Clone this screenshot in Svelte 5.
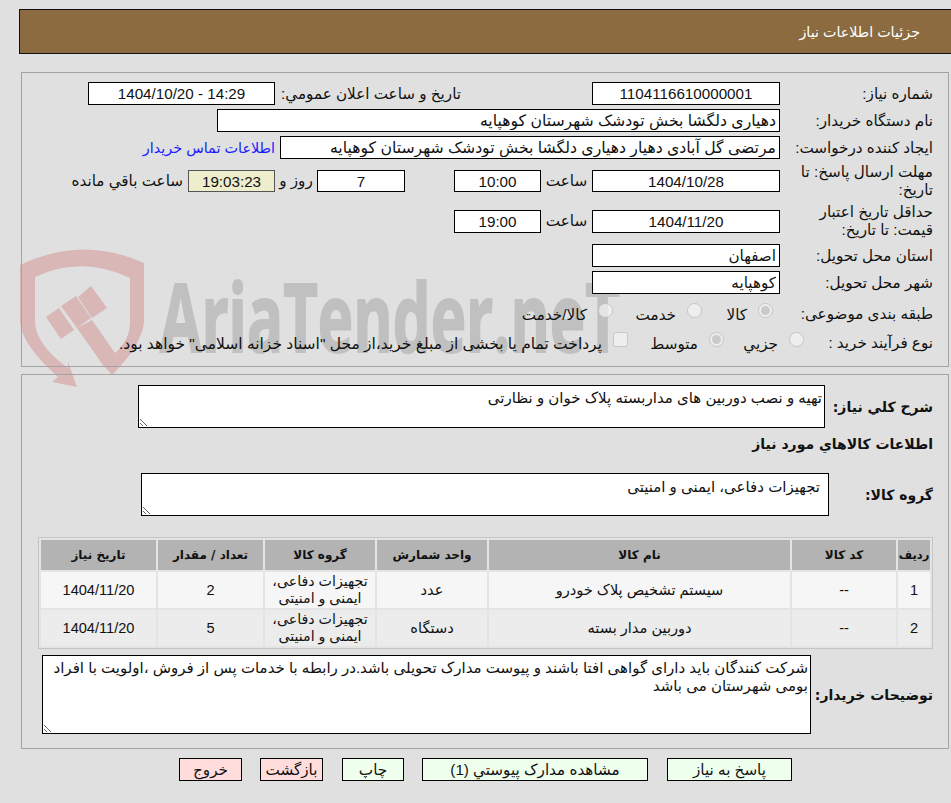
<script>
  const goods = [
    { row: 1, code: '--', name: 'سیستم تشخیص پلاک خودرو', unit: 'عدد', group: 'تجهیزات دفاعی، ایمنی و امنیتی', qty: 2, date: '1404/11/20' },
    { row: 2, code: '--', name: 'دوربین مدار بسته', unit: 'دستگاه', group: 'تجهیزات دفاعی، ایمنی و امنیتی', qty: 5, date: '1404/11/20' }
  ];
</script>

<div class="page" dir="rtl">
  <svg class="watermark" width="640" height="160" viewBox="0 240 640 160" aria-hidden="true">
    <path class="shield" d="M20 265 Q82 235 144 263 L144 322 Q142 345 112 375 L103 365 L77 328 L92 320 L115 353 Q130 340 130 322 L130 278 Q82 255 35 277 L35 322 Q36 345 68 368 L68 362 L77 387 L52 382 L58 377 Q22 345 20 322Z" />
    <path class="shield" d="M46 317 L59 308 L74 330 L61 339Z M61 306 L76 296 L91 318 L77 328Z M78 297 L91 286 L107 308 L92 318Z" />
    <text class="wm-text" x="160" y="352" textLength="460" lengthAdjust="spacingAndGlyphs">AriaTender.neT</text>
  </svg>

  <header class="title-bar">جزئیات اطلاعات نیاز</header>

  <section class="panel first">
    <div class="row">
      <span class="label">شماره نیاز:</span>
      <input class="field mid" readonly value="1104116610000001" />
      <span class="label public">تاریخ و ساعت اعلان عمومي:</span>
      <input class="field mid stamp" readonly value="1404/10/20 - 14:29" dir="ltr" />
    </div>
    <div class="row">
      <span class="label">نام دستگاه خریدار:</span>
      <input class="field buyer" readonly value="دهیاری دلگشا بخش تودشک شهرستان کوهپایه" />
    </div>
    <div class="row">
      <span class="label">ایجاد کننده درخواست:</span>
      <input class="field creator" readonly value="مرتضی گل آبادی دهیار دهیاری دلگشا بخش تودشک شهرستان کوهپایه" />
      <a class="contact" href="#contact">اطلاعات تماس خریدار</a>
    </div>
    <div class="row tall">
      <span class="label">مهلت ارسال پاسخ: تا تاریخ:</span>
      <input class="field mid short" readonly value="1404/10/28" />
      <span class="hour">ساعت</span>
      <input class="field small short" readonly value="10:00" />
      <input class="field days short" readonly value="7" />
      <span class="day-word">روز و</span>
      <input class="field clock short" readonly value="19:03:23" />
      <span class="left-word">ساعت باقي مانده</span>
    </div>
    <div class="row tall place-gap">
      <span class="label">حداقل تاریخ اعتبار قیمت: تا تاریخ:</span>
      <input class="field mid" readonly value="1404/11/20" />
      <span class="hour">ساعت</span>
      <input class="field small" readonly value="19:00" />
    </div>
    <div class="row">
      <span class="label">استان محل تحویل:</span>
      <input class="field mid start" readonly value="اصفهان" />
    </div>
    <div class="row">
      <span class="label">شهر محل تحویل:</span>
      <input class="field mid start" readonly value="کوهپایه" />
    </div>
    <div class="row options topic">
      <span class="label">طبقه بندی موضوعی:</span>
      <label class="opt o-goods"><input type="radio" name="topic" disabled checked />کالا</label>
      <label class="opt o-service"><input type="radio" name="topic" disabled />خدمت</label>
      <label class="opt"><input type="radio" name="topic" disabled />کالا/خدمت</label>
    </div>
    <div class="row options process">
      <span class="label">نوع فرآیند خرید :</span>
      <label class="opt o-minor"><input type="radio" name="process" disabled />جزيي</label>
      <label class="opt o-medium"><input type="radio" name="process" disabled checked />متوسط</label>
      <label class="opt o-pay"><input type="checkbox" disabled />پرداخت تمام یا بخشی از مبلغ خرید،از محل "اسناد خزانه اسلامی" خواهد بود.</label>
    </div>
  </section>

  <section class="panel second">
    <div class="note-row summary">
      <strong>شرح کلي نیاز:</strong>
      <textarea readonly>تهیه و نصب دوربین های مداربسته پلاک خوان و نظارتی</textarea>
    </div>
    <h3>اطلاعات کالاهاي مورد نیاز</h3>
    <div class="note-row group">
      <strong>گروه کالا:</strong>
      <textarea readonly>تجهیزات دفاعی، ایمنی و امنیتی</textarea>
    </div>

    <table>
      <thead>
        <tr>
          <th class="c-row">ردیف</th>
          <th class="c-code">کد کالا</th>
          <th class="c-name">نام کالا</th>
          <th class="c-unit">واحد شمارش</th>
          <th class="c-group">گروه کالا</th>
          <th class="c-qty">تعداد / مقدار</th>
          <th class="c-date">تاریخ نیاز</th>
        </tr>
      </thead>
      <tbody>
        {#each goods as item (item.row)}
          <tr>
            <td>{item.row}</td>
            <td>{item.code}</td>
            <td>{item.name}</td>
            <td>{item.unit}</td>
            <td class="group-cell">{item.group}</td>
            <td>{item.qty}</td>
            <td>{item.date}</td>
          </tr>
        {/each}
      </tbody>
    </table>

    <div class="note-row remarks">
      <strong>توضیحات خریدار:</strong>
      <textarea readonly>شرکت کنندگان باید دارای گواهی افتا باشند و پیوست مدارک تحویلی باشد.در رابطه با خدمات پس از فروش ،اولویت با افراد بومی شهرستان می باشد</textarea>
    </div>
  </section>

  <nav class="actions">
    <button type="button" class="go reply">پاسخ به نیاز</button>
    <button type="button" class="go docs">مشاهده مدارک پیوستي (1)</button>
    <button type="button" class="go print">چاپ</button>
    <button type="button" class="stop back">بازگشت</button>
    <button type="button" class="stop quit">خروج</button>
  </nav>
</div>

<style>
  :global(body) {
    margin: 0;
    background: #e0e0e0;
  }

  .page {
    position: relative;
    width: 951px;
    height: 803px;
    overflow: hidden;
    box-sizing: border-box;
    padding-top: 9px;
    font-family: "Liberation Sans", "DejaVu Sans", sans-serif;
    font-size: 15.2px;
    color: #111;
  }

  .watermark {
    position: absolute;
    left: 0;
    top: 240px;
    pointer-events: none;
  }

  .shield {
    fill: #d9b7b7;
  }

  .wm-text {
    direction: ltr;
    font-family: "Open Sans", sans-serif;
    font-size: 95px;
    font-weight: bold;
    fill: #c0c0c0;
    stroke: #c0c0c0;
    stroke-width: 2px;
  }

  .title-bar {
    box-sizing: border-box;
    height: 45px;
    margin-left: 19px;
    padding-right: 31px;
    display: flex;
    align-items: center;
    background: #8b6b3f;
    border: 1px solid #111;
    border-right: 0;
    color: #fff;
    font-size: 14.3px;
  }

  .panel {
    position: relative;
    box-sizing: border-box;
    width: 928px;
    margin: 0 2px 0 0;
    border: 1px solid #a3a3a3;
  }

  .first {
    height: 295px;
    margin-top: 18px;
    padding: 9px 15px 0 0;
  }

  .second {
    height: 375px;
    margin-top: 7px;
    padding: 10px 15px 0 0;
  }

  .row {
    display: flex;
    align-items: center;
    min-height: 23px;
    margin-bottom: 4px;
  }

  .tall {
    min-height: 36px;
  }

  .place-gap {
    margin-bottom: 5px;
  }

  .label {
    width: 153px;
    flex: none;
    line-height: 18px;
    padding-left: 8px;
    box-sizing: border-box;
  }

  .field {
    box-sizing: border-box;
    height: 23px;
    padding: 0 3px;
    background: #fff;
    border: 1px solid #000;
    border-radius: 0;
    font: inherit;
    color: #111;
    text-align: right;
    outline: none;
  }

  .short {
    height: 22px;
  }

  .mid {
    width: 188px;
    text-align: center;
  }

  .stamp {
    width: 187px;
  }

  .start {
    text-align: right;
  }

  .buyer {
    width: 563px;
    font-size: 15.7px;
  }

  .creator {
    width: 500px;
    margin-left: 5px;
    font-size: 15.7px;
  }

  .public {
    width: 317px;
    padding: 0 131px 0 0;
  }

  .contact {
    color: #1a1aff;
    font-size: 14.4px;
    text-decoration: none;
  }

  .hour {
    width: 51px;
    text-align: center;
  }

  .small {
    width: 87px;
    text-align: center;
  }

  .days {
    width: 88px;
    margin-right: 49px;
    text-align: center;
  }

  .day-word {
    width: 42px;
    text-align: center;
  }

  .clock {
    width: 87px;
    text-align: center;
    background: #eeeecc;
    border-color: #555;
  }

  .left-word {
    margin-right: 5px;
  }

  .options {
    margin-bottom: 0;
    height: 29px;
  }

  .topic {
    margin-top: 5px;
  }

  .opt {
    display: flex;
    align-items: center;
    gap: 11px;
    padding-top: 2px;
    white-space: nowrap;
    box-sizing: border-box;
  }

  .opt input {
    width: 15px;
    height: 15px;
    margin: 0 0 9px;
  }

  .topic .label {
    width: 160px;
  }

  .process .label {
    width: 129px;
  }

  .o-goods {
    width: 71px;
  }

  .o-service {
    width: 89px;
  }

  .o-minor {
    width: 80px;
  }

  .o-medium {
    width: 96px;
  }

  .o-pay {
    font-size: 15.5px;
  }

  .note-row {
    display: flex;
    align-items: center;
  }

  .note-row strong {
    flex: none;
    font-size: 14px;
    font-family: "DejaVu Sans", sans-serif;
  }

  textarea {
    box-sizing: border-box;
    display: block;
    padding: 3px 2px 2px;
    background: #fff;
    border: 1px solid #000;
    border-radius: 0;
    font: inherit;
    font-size: 15px;
    line-height: 18px;
    color: #111;
    outline: none;
    overflow: hidden;
  }

  .summary strong {
    width: 108px;
  }

  .summary textarea {
    width: 687px;
    height: 43px;
  }

  h3 {
    margin: 6px 0 19px;
    height: 20px;
    line-height: 20px;
    font-family: "DejaVu Sans", sans-serif;
    font-size: 14px;
    font-weight: bold;
  }

  .group strong {
    width: 104px;
  }

  .group textarea {
    width: 688px;
    height: 43px;
    padding: 4px 8px 2px 2px;
  }

  table {
    box-sizing: border-box;
    width: 895px;
    margin-top: 21px;
    table-layout: fixed;
    border: 1px solid #c4c4c4;
    border-spacing: 2px;
    border-collapse: separate;
    background: #e4e4e4;
    font-size: 14.6px;
  }

  th {
    height: 30px;
    padding: 0;
    background: #b3b3b3;
    font-family: "DejaVu Sans", sans-serif;
    font-size: 12px;
    font-weight: bold;
  }

  th.c-row {
    font-size: 11.5px;
  }

  td {
    height: 36px;
    padding: 0;
    text-align: center;
    line-height: 17px;
  }

  tbody tr:nth-child(odd) td {
    background: #f6f6f6;
  }

  tbody tr:nth-child(even) td {
    background: #ececec;
  }

  .c-row { width: 32px; }
  .c-code { width: 104px; }
  .c-name { width: 301px; }
  .c-unit { width: 110px; }
  .c-group { width: 110px; }
  .c-qty { width: 105px; }
  .c-date { width: 115px; }

  td.group-cell {
    padding: 0 4px;
    font-size: 14.2px;
  }

  .remarks {
    margin-top: 6px;
  }

  .remarks strong {
    width: 122px;
  }

  .remarks textarea {
    width: 769px;
    height: 79px;
  }

  .actions {
    display: flex;
    margin: 9px 159px 0 0;
    gap: 18px;
  }

  button {
    box-sizing: border-box;
    height: 23px;
    padding: 0;
    border: 1px solid #000;
    border-radius: 0;
    font: inherit;
    color: #111;
  }

  .go {
    background: #eeffee;
  }

  .stop {
    background: #ffdddd;
  }

  .reply { width: 125px; margin-left: 1px; }
  .docs { width: 226px; }
  .print { width: 62px; margin-left: 1px; }
  .back { width: 63px; }
  .quit { width: 63px; }
</style>
